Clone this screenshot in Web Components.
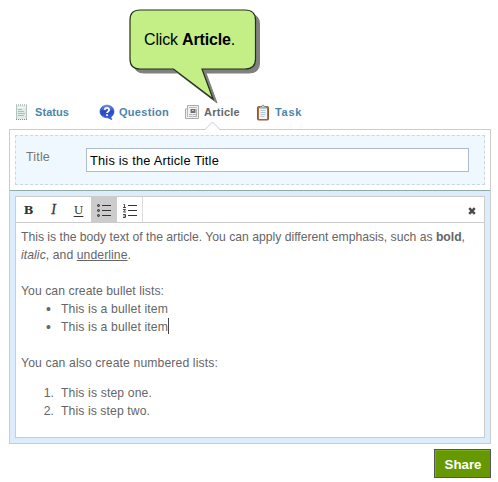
<!DOCTYPE html>
<html lang="en">
<head>
<meta charset="utf-8">
<title>Share an article</title>
<style>
  html, body { margin: 0; background: #fff; }
  body { width: 498px; height: 482px; overflow: hidden; font-family: "Liberation Sans", Arial, sans-serif; }
</style>
</head>
<body>
<share-page></share-page>

<script>
const define = (name, html, setup) => customElements.define(name, class extends HTMLElement {
  constructor() {
    super();
    this.attachShadow({ mode: 'open' }).innerHTML = html;
  }
  connectedCallback() { if (setup) setup(this, this.shadowRoot); }
});

// One line of text whose tracking is adjusted so that it spans its "span" width.
define('text-run', `
  <style>:host { display: inline-block; white-space: nowrap; }</style><slot></slot>`,
  el => {
    const want = +el.getAttribute('span');
    const have = el.getBoundingClientRect().width;
    el.style.letterSpacing = (want - have) / el.textContent.length + 'px';
    el.style.width = want + 'px';
  });

const icons = {
  status: `<svg width="16" height="18" viewBox="0 0 16 18">
    <path d="M1 2.500h11v14H1z" fill="#e0ebe7"/><path d="M1.500 3v13M11.500 3v13" stroke="#b3c5c0"/>
    <path d="M1 2h11M1 16.500h11" stroke="#7d928c" stroke-dasharray="1 1"/>
    <path d="M3 6.500h4M3 8.500h6M3 10.500h7M3 12.500h6" stroke="#aabfb9"/><path d="M2 4.500h9" stroke="#f1f7f5"/></svg>`,
  question: `<svg width="16" height="18" viewBox="0 0 16 18">
    <defs><linearGradient id="q" x2="0" y2="1"><stop stop-color="#7593e4"/><stop offset=".45" stop-color="#2449c4"/><stop offset="1" stop-color="#3d6be4"/></linearGradient></defs>
    <path d="M8 2.200C12 2.200 15 5 15 8.600c0 2.500-1.300 4.300-3.200 5.300l1 2.800-4.100-2C4.500 15 1 12.300 1 8.600 1 5 4 2.200 8 2.200z" fill="url(#q)" stroke="#2848ad" stroke-width=".6"/>
    <path d="M5.700 6.900C5.900 4.300 10.200 4.300 10.200 6.800c0 1.700-2.200 1.600-2.200 3.300M8 11.200v1.800" fill="none" stroke="#fff" stroke-width="1.800"/></svg>`,
  article: `<svg width="16" height="18" viewBox="0 0 16 18">
    <path d="M3.500 2.500h11v13H1.500V6h2z" fill="#f3f3f3" stroke="#aaa"/><path d="M3.500 6v8" stroke="#b5b5b5"/>
    <path d="M5 4.500h8" stroke="#bbb"/><path d="M6.500 6h5v4h-5z" fill="#707070"/><path d="M8 7h2v1H8z" fill="#c5c5c5"/>
    <path d="M12.500 6v8M5 11.500h8M5 13.500h8" stroke="#b0b0b0"/><path d="M8.500 11v4" stroke="#ddd"/></svg>`,
  task: `<svg width="16" height="18" viewBox="0 0 16 18">
    <rect x="2.500" y="3.500" width="11" height="13.500" rx="1" fill="#b56a40" stroke="#935735"/>
    <path d="M4 5h8v11H4z" fill="#f1f6f8"/><path d="M4.500 5V3.500h2C7 1.700 9 1.700 9.500 3.500h2V5z" fill="#c9d2d5" stroke="#727c80" stroke-width=".8"/>
    <path d="M5.500 7.500h5M5.500 9.500h5M5.500 11.500h5M5.500 13.500h4" stroke="#b3c8d2"/></svg>`,
  bold: `<b>B</b>`, italic: `<i>I</i>`, underline: `<u>U</u>`,
  bullets: `<svg width="16" height="16" viewBox="0 0 16 16"><g fill="#777" stroke="#333" stroke-width="1"><circle cx="2.500" cy="3.500" r="1"/><circle cx="2.500" cy="8.500" r="1"/><circle cx="2.500" cy="13.500" r="1"/></g><path d="M6 3.500h9M6 8.500h9M6 13.500h9" stroke="#333"/></svg>`,
  numbers: `<svg width="16" height="16" viewBox="0 0 16 16"><path d="M1.500 2.500h1v3M1 5.500h3M1 7.500h2.500l-2 2.500H4M1 12.500h2.500v3H1M1.500 14h2" fill="none" stroke="#333" stroke-width=".9"/><path d="M6 3.500h9M6 8.500h9M6 13.500h9" stroke="#333"/></svg>`,
  close: `<svg width="8" height="8" viewBox="0 0 8 8"><path d="M1.200 1.200l5.600 5.600M6.800 1.200L1.200 6.800" stroke="#4a4a4a" stroke-width="2.500"/></svg>`
};

define('ui-icon', `
  <style>:host { display: inline-flex; } svg { display: block; }
  b, i, u { line-height: 16px; color: #333; display: block; }
  b { font-family: "DejaVu Serif", serif; font-weight: 700; font-size: 11.500px; }
  i { font-style: italic; font-size: 14px; font-family: "Liberation Serif", serif; -webkit-text-stroke: .3px #333; }
  u { font-family: "DejaVu Serif", serif; font-size: 11.500px; text-underline-offset: 2px; }</style><span></span>`,
  (el, root) => { root.querySelector('span').innerHTML = icons[el.getAttribute('name')]; });

define('call-out', `
  <style>
    :host { position: absolute; left: 125px; top: 5px; width: 140px; height: 104px; }
    svg { position: absolute; inset: 0; }
    p { position: relative; margin: 24px 0 0 19px; font-size: 16px; line-height: 22px; color: #000; }
  </style>
  <svg width="140" height="104" viewBox="125 5 140 104">
    <defs><path id="bubble" d="M140 10H245Q255.500 10 255.500 20V59Q255.500 69 245 69H202L213 99L173.500 69H140Q130 69 130 59V20Q130 10 140 10Z"/></defs>
    <use href="#bubble" x="4" y="4" fill="#808080" stroke="#808080"/>
    <use href="#bubble" fill="#c4ef86" stroke="#24301a" stroke-width="1.200"/>
  </svg>
  <p><slot></slot></p>`);

define('tab-item', `
  <style>
    :host { display: flex; align-items: center; gap: 4px; height: 18px; color: #4a85ae; font-size: 11px; font-weight: 700; }
    :host([active]) { color: #666; position: relative; }
    .notch { display: none; }
    :host([active]) .notch { display: block; position: absolute; left: 21px; top: 18px; }
  </style>
  <slot name="icon"></slot><slot></slot>
  <svg class="notch" width="15" height="9" viewBox="0 0 15 9"><path d="M0 9L7.500 1.500L15 9Z" fill="#fff"/><path d="M0 8.500L7.500 1L15 8.500" fill="none" stroke="#ccc"/></svg>`);

define('tab-bar', `
  <style>:host { display: grid; grid-template-columns: 84px 85px 71px 60px; height: 26px; margin-left: 6px; }</style><slot></slot>`);

define('title-field', `
  <style>
    :host { display: block; padding: 5px; border-bottom: 1px solid #91aaa9; }
    div { display: flex; height: 50px; box-sizing: border-box; border: 1px dashed #c9d7ea; background: #eff7ff; padding: 12px 0 0 10px; }
    label { width: 60px; font-size: 12.500px; line-height: 19px; color: #777; }
    span { box-sizing: border-box; width: 383px; height: 24px; border: 1px solid #aebbd0; background: #fff; padding-left: 3px; font-size: 12.800px; line-height: 23px; color: #000; }
  </style>
  <div><label><text-run span="24">Title</text-run></label><span><slot></slot></span></div>`);

define('tool-bar', `
  <style>
    :host { display: flex; height: 25px; border-bottom: 1px solid #ccc; }
    span { display: grid; place-items: center; width: 25px; }
    span:nth-of-type(4) { background: #ccc; width: 26px; }
    span:nth-of-type(5) { border-right: 1px solid #ddd; }
    span:last-child { margin-left: auto; padding-top: 3px; }
  </style>
  <span><ui-icon name="bold"></ui-icon></span><span><ui-icon name="italic"></ui-icon></span><span><ui-icon name="underline"></ui-icon></span><span><ui-icon name="bullets"></ui-icon></span><span><ui-icon name="numbers"></ui-icon></span><span><ui-icon name="close"></ui-icon></span>`);

define('rich-editor', `
  <style>
    :host { display: block; padding: 5px; background: #dcecfb; height: 242px; }
    .box { box-sizing: border-box; height: 242px; border: 1px solid #ccc; background: #fff; }
    .text { padding: 5px; font-size: 12.200px; line-height: 18px; color: #666; }
  </style>
  <div class="box"><tool-bar></tool-bar><div class="text"><slot></slot></div></div>`);

define('text-row', `
  <style>
    :host { display: flex; height: 18px; white-space: nowrap; }
    .mark { display: none; width: 40px; box-sizing: border-box; text-align: right; }
    :host([mark]) .mark { display: block; padding-right: 7px; }
    :host([mark="•"]) .mark { padding-right: 10px; font-size: 14px; }
    .caret { display: none; width: 1px; height: 16px; background: #444; }
    :host([caret]) .caret { display: block; }
  </style>
  <span class="mark"></span><slot></slot><span class="caret"></span>`,
  (el, root) => { root.querySelector('.mark').textContent = el.getAttribute('mark') || ''; });

define('share-button', `
  <style>
    :host { display: grid; place-items: center; box-sizing: border-box; width: 57px; height: 29px; margin: 5px 0 0 auto; padding: 2px 0 0 1px;
      border: 1px solid #555; background: #690; box-shadow: inset 1px 1px #79ad1c; color: #fff; font-size: 13.300px; font-weight: 700; }
  </style><slot></slot>`);

define('share-page', `
  <style>
    :host { display: block; position: relative; box-sizing: border-box; width: 498px; height: 482px; padding: 103px 7px 0 9px; }
    .panel { box-sizing: border-box; height: 315px; border: 1px solid #ccc; }
    .gap { height: 18px; } .half { height: 12px; }
  </style>
  <tab-bar>
    <tab-item><ui-icon slot="icon" name="status"></ui-icon><text-run span="34">Status</text-run></tab-item>
    <tab-item><ui-icon slot="icon" name="question"></ui-icon><text-run span="50">Question</text-run></tab-item>
    <tab-item active><ui-icon slot="icon" name="article"></ui-icon><text-run span="36">Article</text-run></tab-item>
    <tab-item><ui-icon slot="icon" name="task"></ui-icon><text-run span="27">Task</text-run></tab-item>
  </tab-bar>
  <div class="panel">
    <title-field><text-run span="129">This is the Article Title</text-run></title-field>
    <rich-editor>
      <text-row><text-run span="444">This is the body text of the article. You can apply different emphasis, such as <b>bold</b>,</text-run></text-row>
      <text-row><text-run span="110"><i>italic</i>, and <u>underline</u>.</text-run></text-row>
      <div class="gap"></div>
      <text-row><text-run span="143">You can create bullet lists:</text-run></text-row>
      <text-row mark="•"><text-run span="107">This is a bullet item</text-run></text-row>
      <text-row mark="•" caret><text-run span="107">This is a bullet item</text-run></text-row>
      <div class="gap"></div>
      <text-row><text-run span="197">You can also create numbered lists:</text-run></text-row>
      <div class="half"></div>
      <text-row mark="1."><text-run span="91">This is step one.</text-run></text-row>
      <text-row mark="2."><text-run span="89">This is step two.</text-run></text-row>
    </rich-editor>
  </div>
  <share-button><text-run span="37">Share</text-run></share-button>
  <call-out><text-run span="91">Click <b>Article</b>.</text-run></call-out>`);
</script>
</body>
</html>
